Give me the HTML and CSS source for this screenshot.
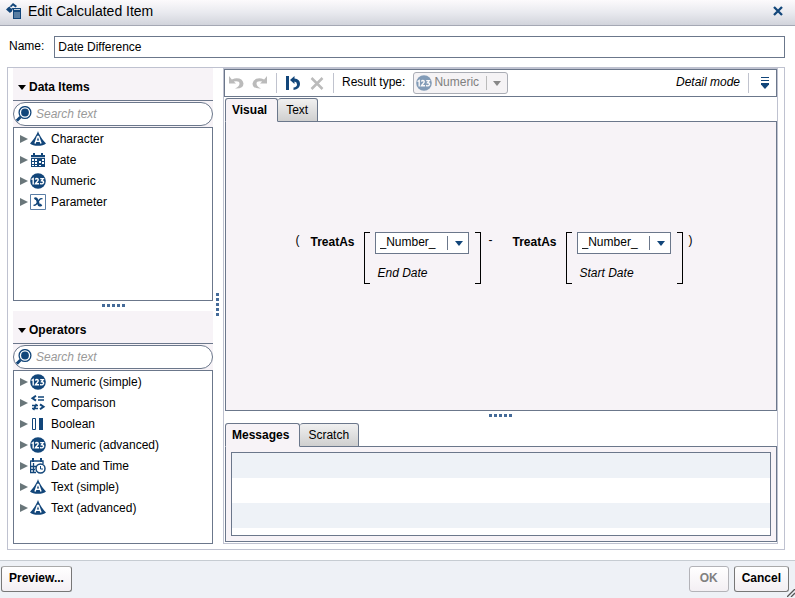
FILE: index.html
```html
<!DOCTYPE html>
<html lang="en">
<head>
<meta charset="utf-8">
<title>Edit Calculated Item</title>
<link rel="stylesheet" href="styles.css">
</head>
<body>
<svg class="defs" aria-hidden="true">
  <symbol id="i-text" viewBox="0 0 16 16"><path d="M8 0C9 3.500 12.500 9 16 12.500 13 15.600 3 15.600 0 12.500 3.500 9 7 3.500 8 0Z" fill="#12467a"/><path d="M5 12.500 7.500 5.500H8.500L11 12.500M5.800 10.300H10.200" fill="none" stroke="#fff" stroke-width="1.500"/></symbol>
  <symbol id="i-date" viewBox="0 0 16 16"><path d="M1 3H15V15H1ZM3 1H5V4H3ZM11 1H13V4H11Z" fill="#12467a"/><path d="M1 5.500H15" stroke="#b9c9d9"/><path d="M2 7H4V9H2ZM5 7H7V9H5ZM12 7H14V9H12ZM2 10H4V12H2ZM5 10H7V12H5ZM12 10H14V12H12ZM2 13H4V14H2ZM5 13H7V14H5ZM9 13H11V14H9ZM9 9H11V11H9Z" fill="#fff"/></symbol>
  <symbol id="i-num" viewBox="0 0 16 16"><circle cx="8" cy="8" r="7.800" fill="#12467a"/><path d="M1.500 6.500 3.200 5.500V11.500M5.300 6.500Q6.800 4.700 8.200 6.200C8.800 7.500 6.500 9 5.500 10.700H9M10.200 5.600H13.200L11.600 7.700Q14 8 13.500 9.600 12.500 11.500 10 10.500" fill="none" stroke="#fff" stroke-width="1.400"/></symbol>
  <symbol id="i-param" viewBox="0 0 16 16"><path d="M.5.5H15.500V15.500H.5Z" fill="#fff" stroke="#5a7ea6"/><path d="M4.500 5Q6.700 3.500 7.500 7L8.500 10Q9.300 12.500 11.500 10.500" fill="none" stroke="#12467a" stroke-width="2.400"/><path d="M12.500 5Q10.500 3.500 8 7.800T3.500 11" fill="none" stroke="#12467a" stroke-width="1.400"/></symbol>
  <symbol id="i-comp" viewBox="0 0 16 16"><path d="M6 .8 2.500 3.200 6 5.600M10 9.400 13.500 11.800 10 14.200" fill="none" stroke="#12467a" stroke-width="2"/><path d="M8 2H14M8 5H14M2 10.500H8M2 13.500H8M6.500 9 3.500 15" fill="none" stroke="#12467a" stroke-width="1.700"/></symbol>
  <symbol id="i-bool" viewBox="0 0 16 16"><path d="M2.500 2.500H5.500V13.500H2.500Z" fill="#fff" stroke="#12467a"/><path d="M9 2H13V14H9Z" fill="#12467a"/></symbol>
  <symbol id="i-time" viewBox="0 0 16 16"><path d="M.5 3H13V6M.5 2.500V14.500H6M3.500 5V14M1 8.500H6M1 11.500H5" fill="none" stroke="#12467a" stroke-width="1.300"/><path d="M2 0H4V4H2ZM10 0H12V4H10Z" fill="#12467a"/><circle cx="10.500" cy="10.500" r="4.500" fill="#fff" stroke="#12467a" stroke-width="1.500"/><path d="M10.500 8V11H13" fill="none" stroke="#12467a"/></symbol>
  <symbol id="i-search" viewBox="0 0 16 16"><path d="M.8 14.800 4.500 11" stroke="#12467a" stroke-width="2.800"/><circle cx="9" cy="6.500" r="5.900" fill="#fff" stroke="#12467a" stroke-width="1.300"/><circle cx="9" cy="6.500" r="3.900" fill="#12467a"/></symbol>
  <symbol id="i-undo" viewBox="0 0 16 16"><path d="M1 1V8.500H8L5.800 6.400Q11.500 5.500 11.500 8.500T7 13.500Q15.500 14 15.500 8.500 14.500 2.500 6.500 3.500L3.800 4.400Z" fill="#bbb"/></symbol>
  <symbol id="i-right" viewBox="0 0 8 8"><path d="M0 0 8 4 0 8Z" fill="#69767a"/></symbol>
  <symbol id="i-down" viewBox="0 0 8 5"><path d="M0 0H8L4 5Z" fill="currentColor"/></symbol>
</svg>

<header class="titlebar">
  <svg class="icon" viewBox="0 0 16 16" aria-hidden="true"><path d="M7 5H15V16H7Z" fill="#12467a"/><path d="M8 6.500H14" stroke="#c6d3e0"/><path d="M9 9V15M11 9V15M13 9V15" stroke="#9db4ca"/><path d="M0 6.500 2.500 4 6 8 4 10ZM3.500 3.500 7 0 11 3 9.500 4.500 7 2.500 5.500 4Z" fill="#12467a"/><path d="M3 4 5.500 7.500 6.500 5" fill="none" stroke="#12467a" stroke-width="1.400"/></svg>
  <h1>Edit Calculated Item</h1>
  <button class="close" aria-label="Close"><svg viewBox="0 0 10 10"><path d="M1 1 9 9M9 1 1 9" stroke="#12467a" stroke-width="2.300"/></svg></button>
</header>

<main>
  <div class="name-row">
    <label for="name">Name:</label>
    <input id="name" type="text" value="Date Difference">
  </div>

  <div class="frame">
    <aside>
      <section class="side">
        <h2><svg class="fold" aria-hidden="true"><use href="#i-down"/></svg>Data Items</h2>
        <div class="search"><svg class="icon" aria-hidden="true"><use href="#i-search"/></svg><input type="text" placeholder="Search text" aria-label="Search data items"></div>
        <ul>
          <li><button><svg class="twist"><use href="#i-right"/></svg><svg class="icon"><use href="#i-text"/></svg>Character</button></li>
          <li><button><svg class="twist"><use href="#i-right"/></svg><svg class="icon"><use href="#i-date"/></svg>Date</button></li>
          <li><button><svg class="twist"><use href="#i-right"/></svg><svg class="icon"><use href="#i-num"/></svg>Numeric</button></li>
          <li><button><svg class="twist"><use href="#i-right"/></svg><svg class="icon"><use href="#i-param"/></svg>Parameter</button></li>
        </ul>
      </section>
      <div class="grip"><i></i><i></i><i></i><i></i><i></i></div>
      <section class="side">
        <h2><svg class="fold" aria-hidden="true"><use href="#i-down"/></svg>Operators</h2>
        <div class="search"><svg class="icon" aria-hidden="true"><use href="#i-search"/></svg><input type="text" placeholder="Search text" aria-label="Search operators"></div>
        <ul>
          <li><button><svg class="twist"><use href="#i-right"/></svg><svg class="icon"><use href="#i-num"/></svg>Numeric (simple)</button></li>
          <li><button><svg class="twist"><use href="#i-right"/></svg><svg class="icon"><use href="#i-comp"/></svg>Comparison</button></li>
          <li><button><svg class="twist"><use href="#i-right"/></svg><svg class="icon"><use href="#i-bool"/></svg>Boolean</button></li>
          <li><button><svg class="twist"><use href="#i-right"/></svg><svg class="icon"><use href="#i-num"/></svg>Numeric (advanced)</button></li>
          <li><button><svg class="twist"><use href="#i-right"/></svg><svg class="icon"><use href="#i-time"/></svg>Date and Time</button></li>
          <li><button><svg class="twist"><use href="#i-right"/></svg><svg class="icon"><use href="#i-text"/></svg>Text (simple)</button></li>
          <li><button><svg class="twist"><use href="#i-right"/></svg><svg class="icon"><use href="#i-text"/></svg>Text (advanced)</button></li>
        </ul>
      </section>
    </aside>

    <div class="grip vertical"><i></i><i></i><i></i><i></i><i></i></div>

    <div class="editor">
      <div class="toolbar">
        <button disabled aria-label="Undo"><svg class="icon"><use href="#i-undo"/></svg></button>
        <button disabled aria-label="Redo"><svg class="icon flip"><use href="#i-undo"/></svg></button>
        <span class="sep"></span>
        <button aria-label="Revert"><svg class="icon" viewBox="0 0 16 16"><path d="M1 1H4V15H1Z" fill="#12467a"/><path d="M5 5 9.500 1V3.500Q15 4 15 9T8.500 15V12.500Q12 12 12 9.500T9.500 6.500V9Z" fill="#12467a"/></svg></button>
        <button disabled aria-label="Delete"><svg class="icon" viewBox="0 0 16 16"><path d="M2.500 3 13.500 14M13.500 3 2.500 14" stroke="#bbb" stroke-width="2.500"/></svg></button>
        <span class="sep"></span>
        <label for="result">Result type:</label>
        <div class="combo disabled">
          <svg class="icon lead" aria-hidden="true"><use href="#i-num"/></svg>
          <select id="result" disabled><option>Numeric</option></select>
          <svg class="caret" aria-hidden="true"><use href="#i-down"/></svg>
        </div>
        <em>Detail mode</em>
        <span class="sep"></span>
        <button class="menu" aria-label="Options"><svg class="icon" viewBox="0 0 16 16"><path d="M4 2.500H12M4 5.500H12" stroke="#12467a"/><path d="M4 8H12V9.500L8 14 4 9.500Z" fill="#12467a"/></svg></button>
      </div>

      <div class="tabs" role="tablist">
        <button role="tab" aria-selected="true">Visual</button><button role="tab" aria-selected="false">Text</button>
      </div>
      <section class="canvas">
        <div class="expression">
          <span class="paren">(</span>
          <b>TreatAs</b>
          <div class="operand">
            <div class="combo">
              <select aria-label="End Date type"><option>_Number_</option></select>
              <svg class="caret" aria-hidden="true"><use href="#i-down"/></svg>
            </div>
            <em>End Date</em>
          </div>
          <span class="minus">-</span>
          <b>TreatAs</b>
          <div class="operand">
            <div class="combo">
              <select aria-label="Start Date type"><option>_Number_</option></select>
              <svg class="caret" aria-hidden="true"><use href="#i-down"/></svg>
            </div>
            <em>Start Date</em>
          </div>
          <span class="paren">)</span>
        </div>
      </section>

      <div class="grip"><i></i><i></i><i></i><i></i><i></i></div>

      <div class="tabs" role="tablist">
        <button role="tab" aria-selected="true">Messages</button><button role="tab" aria-selected="false">Scratch</button>
      </div>
      <section class="messages"><div class="rows"></div></section>
    </div>
  </div>
</main>

<footer>
  <button>Preview...</button>
  <button class="ok" disabled>OK</button>
  <button>Cancel</button>
  <svg class="resize" viewBox="0 0 8 8" aria-hidden="true"><path d="M0 8 8 0M4 8 8 4" stroke="#555" stroke-width="1.300"/></svg>
</footer>
</body>
</html>
```
FILE: styles.css
```css
:root {
  --line: #6b778b;
  --soft: #bfc2d0;
  --tint: #f7f3f7;
  --blue: #12467a;
}

* { box-sizing: border-box; }

body {
  margin: 0;
  height: 100vh;
  display: flex;
  flex-direction: column;
  background: #fff;
  color: #000;
  font: 12px/16px "Liberation Sans", Arial, sans-serif;
}

button, input, select {
  font: inherit;
  color: inherit;
}

button {
  display: flex;
  align-items: center;
  padding: 0;
  border: 0;
  background: none;
}

h1, h2, ul { margin: 0; padding: 0; }

svg { display: block; flex: none; }
.defs { position: absolute; width: 0; height: 0; }
.icon { width: 16px; height: 16px; }
.flip { transform: scaleX(-1); }

.titlebar {
  flex: none;
  display: flex;
  align-items: center;
  gap: 6px;
  height: 26px;
  padding: 0 12px 3px 6px;
  border-bottom: 1px solid #a5a8b4;
  background: linear-gradient(#fcfafc, #e9eaef 50%, #d2d4dc);
}
.titlebar h1 { flex: 1; font-size: 14px; font-weight: normal; }
.close svg { width: 10px; height: 10px; }

main {
  flex: 1;
  min-height: 0;
  display: flex;
  flex-direction: column;
  gap: 9px;
  padding: 10px 10px 10px 7px;
}

.name-row { display: flex; gap: 10px; padding-left: 2px; }
.name-row label { padding-top: 2px; }
.name-row input {
  flex: 1;
  height: 22px;
  padding: 0 3px;
  border: 1px solid var(--line);
}

.frame {
  flex: 1;
  min-height: 0;
  display: flex;
  padding: 0 6px 5px 5px;
  border: 1px solid var(--soft);
}

aside {
  width: 200px;
  display: flex;
  flex-direction: column;
}

.side {
  flex: 1;
  min-height: 0;
  display: flex;
  flex-direction: column;
  background: var(--tint);
}
.side h2 {
  display: flex;
  align-items: center;
  gap: 3px;
  height: 33px;
  padding: 6px 5px 0;
  border-bottom: 1px solid var(--line);
  font-size: 12px;
}
.fold { width: 8px; height: 5px; }

.search { position: relative; margin-top: 1px; }
.search .icon { position: absolute; left: 3px; top: 4px; }
.search input {
  display: block;
  width: 100%;
  height: 24px;
  padding: 0 8px 0 22px;
  border: 1px solid var(--line);
  border-radius: 12px;
  background: #fff;
  font-style: italic;
}
.search input::placeholder { color: #999; opacity: 1; }

.side ul {
  flex: 1;
  margin-top: 1px;
  border: 1px solid var(--line);
  background: #fff;
  list-style: none;
}
.side li button {
  width: 100%;
  height: 21px;
  padding-left: 6px;
}
.twist { width: 8px; height: 8px; margin-right: 2px; }
.side li .icon { margin-right: 5px; }

.grip {
  flex: none;
  display: flex;
  justify-content: center;
  gap: 2px;
  height: 10px;
  padding-top: 3px;
}
.grip i { width: 3px; height: 3px; background: #456b99; }
.grip.vertical {
  flex-direction: column;
  width: 10px;
  height: auto;
  padding: 0 0 3px 3px;
}

.editor {
  flex: 1;
  min-width: 0;
  display: flex;
  flex-direction: column;
  padding-bottom: 1px;
  border: 1px solid var(--soft);
}
.editor > .grip { height: 11px; }

.toolbar {
  flex: none;
  display: flex;
  align-items: center;
  gap: 8px;
  height: 28px;
  padding: 0 3px;
  border: 1px solid var(--line);
}
.toolbar .sep { width: 1px; height: 20px; background: #c0c3ce; }
.toolbar label { padding-bottom: 2px; }
.toolbar em { margin-left: auto; padding-bottom: 2px; }
.menu { padding: 0; }

.combo { position: relative; }
.combo select {
  display: block;
  width: 94px;
  height: 22px;
  padding: 0 24px 2px 4px;
  border: 1px solid var(--line);
  border-radius: 0;
  background: linear-gradient(var(--line), var(--line)) right 20px center / 1px 14px no-repeat #fff;
  appearance: none;
}
.combo .caret {
  position: absolute;
  right: 7px;
  top: 9px;
  width: 8px;
  height: 5px;
  color: var(--blue);
}
.combo .lead { position: absolute; left: 3px; top: 3px; opacity: 0.5; }
.combo.disabled select {
  width: 95px;
  padding-left: 20px;
  border-color: #aaadb5;
  border-radius: 3px;
  background-color: #f5f3f5;
  background-image: linear-gradient(#bbb, #bbb);
  color: #808080;
  opacity: 1;
}
.combo.disabled .caret { color: #888; }

.tabs {
  flex: none;
  display: flex;
  height: 24px;
  margin-top: 1px;
  margin-bottom: -1px;
  padding-left: 1px;
}
.tabs button {
  position: relative;
  padding: 0 9px 1px 8px;
  border: 1px solid var(--line);
  border-radius: 3px 3px 0 0;
  background: linear-gradient(#f0f0f0, #cfcfcf);
}
.tabs button + button { border-left: 0; }
.tabs button[aria-selected="true"] {
  padding-left: 6px;
  padding-right: 10px;
  border-bottom-color: var(--tint);
  background: var(--tint);
  font-weight: bold;
}

.canvas {
  flex: 1;
  min-height: 0;
  display: flex;
  justify-content: center;
  align-items: center;
  margin-left: 1px;
  border: 1px solid var(--line);
  background: var(--tint);
}

.expression { display: flex; padding: 0 14px 16px 0; }
.expression b { margin: 2px 9px 0 11px; }
.minus { margin-left: 8px; }
.minus + b { margin-left: 20px; }
.expression .paren:last-child { margin-left: 6px; }

.operand {
  position: relative;
  width: 117px;
  height: 52px;
  padding: 0 11px;
}
.operand::before, .operand::after {
  content: "";
  position: absolute;
  top: 0;
  bottom: 0;
  width: 5px;
  border: 1px solid #000;
}
.operand::before { left: 0; border-right: 0; }
.operand::after { right: 0; border-left: 0; }
.operand em { display: block; margin: 11px 3px 0; }

.messages {
  flex: none;
  height: 96px;
  margin-left: 1px;
  padding: 5px;
  border: 1px solid var(--line);
  background: var(--tint);
}
.rows {
  height: 100%;
  border: 1px solid var(--line);
  background: repeating-linear-gradient(#eef2f7 0 25px, #fff 25px 50px);
}

footer {
  position: relative;
  flex: none;
  display: flex;
  gap: 5px;
  height: 38px;
  padding: 5px 6px 7px 1px;
  border-top: 1px solid #c6ccd2;
  background: #eef1f6;
}
footer button {
  height: 26px;
  padding: 0 7px 2px;
  border: 1px solid #777;
  border-top-color: #aaa;
  border-radius: 3px;
  background: linear-gradient(#fff, #f3eff3);
  font-weight: bold;
}
footer .ok {
  margin-left: auto;
  padding: 0 10px 2px;
  border-color: #b3b3b8;
  color: #808080;
}
.resize { position: absolute; right: 0; bottom: 1px; width: 8px; height: 8px; }
```
